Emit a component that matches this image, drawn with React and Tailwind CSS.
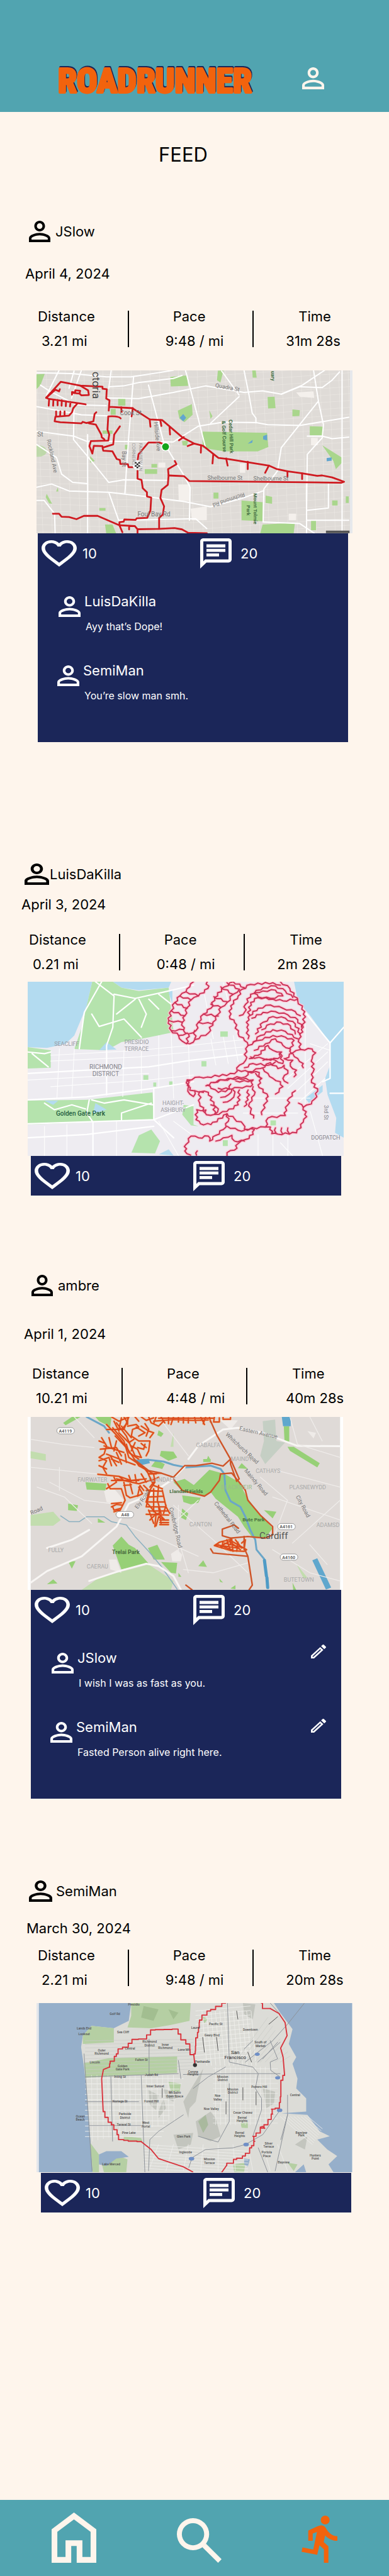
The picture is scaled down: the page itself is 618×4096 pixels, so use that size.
import React from "react";

/* ---------- map drawing helpers ---------- */

// Map artwork is plotted on a 2:3 survey grid; these bring it to screen units.
const SX = 0.394;
const SY = 0.262;

// Turns "x,y x,y ..." into a street-like path of small right-angled steps.
function stair(text, step = 14) {
  const pts = text.trim().split(/\s+/).map((p) => p.split(",").map(Number));
  let d = `M${pts[0][0]} ${pts[0][1]}`;
  for (let i = 1; i < pts.length; i++) {
    const [x0, y0] = pts[i - 1];
    const [x1, y1] = pts[i];
    const n = Math.max(1, Math.round(Math.hypot(x1 - x0, y1 - y0) / step / 2));
    for (let k = 1; k <= n; k++) {
      const x = Math.round(x0 + ((x1 - x0) * k) / n);
      const y = Math.round(y0 + ((y1 - y0) * k) / n);
      d += k % 2 ? `H${x}V${y}` : `V${y}H${x}`;
    }
  }
  return d;
}

// Joins the points with lines that sway a little from side to side.
function sway(text, size = 5) {
  const pts = text.trim().split(/\s+/).map((p) => p.split(",").map(Number));
  let d = `M${pts[0][0]} ${pts[0][1]}`;
  for (let i = 1; i < pts.length; i++) {
    const [x0, y0] = pts[i - 1];
    const [x1, y1] = pts[i];
    const len = Math.hypot(x1 - x0, y1 - y0) || 1;
    const n = Math.max(1, Math.round(len / 16));
    for (let k = 1; k < n; k++) {
      const a = k % 2 ? size : -size;
      const x = Math.round(x0 + ((x1 - x0) * k) / n - ((y1 - y0) / len) * a);
      const y = Math.round(y0 + ((y1 - y0) * k) / n + ((x1 - x0) / len) * a);
      d += `L${x} ${y}`;
    }
    d += `L${x1} ${y1}`;
  }
  return d;
}

function Line({ d, c, w = 1, o = 1 }) {
  return (
    <path
      d={d}
      fill="none"
      stroke={c}
      strokeWidth={w}
      opacity={o}
      strokeLinejoin="round"
      strokeLinecap="round"
      vectorEffect="non-scaling-stroke"
    />
  );
}

function Label({ x, y, s = 9, r = 0, c = "#777", b = 400, anchor = "start", children }) {
  const px = Math.round(x * SX);
  const py = Math.round(y * SY);
  return (
    <text
      x={px}
      y={py}
      fontSize={s}
      fill={c}
      fontWeight={b}
      textAnchor={anchor}
      transform={r ? `rotate(${r} ${px} ${py})` : undefined}
      className="font-['Roboto',sans-serif]"
    >
      {children}
    </text>
  );
}

function MapFrame({ x, y, w, h, title, className, labels, children }) {
  return (
    <svg
      role="img"
      aria-label={title}
      className={`block w-full ${className}`}
      viewBox={`${x * SX} ${y * SY} ${w * SX} ${h * SY}`}
      preserveAspectRatio="xMidYMid slice"
    >
      <g transform={`scale(${SX} ${SY})`}>{children}</g>
      {labels}
    </svg>
  );
}

/* ---------- maps ---------- */

function DinosaurMap() {
  const fine = [];
  for (let i = 0; i < 34; i++) {
    const x = 150 + i * 38;
    fine.push(`M${x} 90L${x + 25} 1080`);
  }
  for (let i = 0; i < 26; i++) {
    const y = 60 + i * 42;
    fine.push(`M149 ${y}L780 ${y + 30}L1422 ${y - 40}`);
  }
  const green = "#a9d68c";
  return (
    <MapFrame
      x={149} y={90} w={1273} h={990}
      title="Route drawn as a dinosaur across Victoria"
      className="h-[259px]"
      labels={
        <g>
          <Label x={376} y={98} s={17} r={90} c="#444">ctoria</Label>
          <Label x={868} y={190} s={9} r={11}>Quadra St</Label>
          <Label x={486} y={364} s={10}>Cook St</Label>
          <Label x={623} y={405} s={9} r={84}>Hillside Ave</Label>
          <Label x={925} y={388} s={8} r={88} c="#3f6b3f" b={700}>Cedar Hill Park</Label>
          <Label x={897} y={396} s={8} r={88} c="#3f6b3f" b={700}>&amp; Golf Course</Label>
          <Label x={152} y={494} s={10}>St</Label>
          <Label x={190} y={512} s={9} r={78}>Rockland Ave</Label>
          <Label x={494} y={582} s={9} r={90}>Bay St</Label>
          <Label x={564} y={532} s={8} r={90} c="#999">FAIRVIEW IN</Label>
          <Label x={536} y={532} s={8} r={90} c="#999">CORNERS</Label>
          <Label x={838} y={756} s={9}>Shelbourne St</Label>
          <Label x={1022} y={758} s={9}>Shelbourne St</Label>
          <Label x={985} y={832} s={9} r={161}>Richmond Rd</Label>
          <Label x={1022} y={834} s={8} r={90} c="#3f6b3f" b={700}>Mount Tolmie</Label>
          <Label x={996} y={910} s={8} r={90} c="#3f6b3f" b={700}>Park</Label>
          <Label x={556} y={978} s={10}>Foul Bay Rd</Label>
          <Label x={1094} y={95} s={8} r={88} c="#3f6b3f" b={700}>uary</Label>
        </g>
      }
    >
      <rect x="149" y="90" width="1273" height="990" fill="#dfdbd7" />
      {fine.map((d) => <Line key={d} d={d} c="#f1eeea" w={0.6} o={0.8} />)}
      <g fill={green}>
        <path d="M818 462L1078 470L1083 555L1040 582L905 582L818 560Z" />
        <path d="M149 115L182 112L165 180L149 205ZM688 130L755 122L760 185L690 188ZM880 92L902 92L890 165L876 150ZM1018 90H1032L1036 135H1020ZM1080 252L1108 250L1112 320L1082 322ZM478 262H507V305H478ZM718 335L775 295L778 360L745 405L725 385ZM1180 328L1210 332L1208 368L1180 370Z" />
        <path d="M1250 430L1305 432L1303 485H1250ZM845 332L858 370L850 385ZM585 690H635V718H585ZM612 658H635V680H612ZM505 542H517V570H505ZM190 840L212 900L200 898L186 860ZM365 610L384 640L365 650ZM448 325H468V360H448ZM415 455H455V475H415ZM735 520L760 515L755 548L738 545Z" />
        <path d="M975 880L1060 890V1005L975 1000ZM862 832H882V868H862ZM1072 850L1098 858V900L1072 895ZM1300 545L1380 620V650L1355 690L1345 640ZM1395 855H1407V895H1395ZM1340 880H1362V910H1340ZM425 1025H455L470 1080H430ZM1060 1025L1190 1015L1185 1080H1050ZM1255 1000H1275V1060H1255ZM235 800L228 825H237ZM402 925H427V942H402Z" />
        <circle cx="155" cy="580" r="35" opacity=".6" />
      </g>
      <g fill="#62a5cf">
        <path d="M726 378L740 355L752 378L740 400ZM1062 490L1078 480V515L1062 510ZM1318 622L1338 618V638L1318 642ZM1000 535L1020 512L1018 530Z" />
      </g>
      <g fill="#f4f0ec">
        <path d="M720 782H768V882H722ZM770 930L835 915V1000H775ZM1195 225L1265 218L1268 258L1210 250ZM1255 500H1282V545H1255ZM968 655H990V712H968ZM1165 960H1195V1000H1165ZM640 650H668V680H640Z" />
      </g>
      {[
        "M149 105L290 110L430 130L530 130L640 105L700 90",
        "M440 190L500 185L560 165L700 140L735 122",
        "M430 258L560 262L700 225L830 185L870 195L985 225L1060 215L1135 235L1220 180L1310 90",
        "M165 180L200 215L310 300L430 305",
        "M149 460L300 490L350 520L700 525L800 430L900 405L1035 408L1080 420L1210 425L1407 375",
        "M749 90L800 380L830 560M965 250L850 412M895 95L965 240M985 90L1005 240L1018 350L1033 380V410",
        "M1265 90L1285 280L1305 420L1300 500L1240 600L1237 930M1283 280L1135 560L1120 700L1065 810L1062 1010",
        "M1135 235L1210 190L1300 195L1340 150L1370 100M1240 490L1300 490L1340 505L1407 495",
        "M149 800L210 780L280 822L440 830L600 858L740 885L850 918L970 870L1065 820",
        "M300 330L298 510L370 640L440 770L500 755L680 758M440 830L480 1000L790 990L835 1050",
        "M149 880L180 880L222 960L224 1080M149 540L230 620L250 720L295 770L355 778",
        "M540 130L520 500L505 840M600 180L660 520L690 600L740 720L768 800L765 1000",
        "M1237 780V1080M1325 780V925L1237 940M1380 90V1080M1237 1000H1407M1062 1010L1210 1020L1270 1080",
        "M240 90L190 240M330 90L290 260M300 95L280 200M450 90L440 200M355 480V1080M149 310L330 360L480 370",
      ].map((d) => <Line key={d} d={d} c="#ffffff" w={2} />)}
      <path d="M1412 90H1422V1080H1412Z" fill="#e6e8ec" />
      <path d="M1315 1063H1410V1078H1315Z" fill="#555" />
      {[
        "M188 257L247 160L325 183L415 190V202L432 205L430 262L443 272L440 335M443 312L535 320L605 388L655 392L735 495L785 535L820 548L882 622L920 628L1085 668L1115 688L1160 703L1220 715L1280 730L1300 728L1340 740L1388 766L1378 772L765 762L743 732L681 728",
        "M325 183L357 212L360 240L330 242L322 232M292 238V222L305 224V212L325 215L322 232L298 228M188 257L225 208L240 218L243 205",
        "M188 257L197 263L347 297M200 265L198 305M217 268L216 305M234 270V303M251 272L250 305M268 278L267 308M286 282L284 310",
        "M313 293L297 320L292 345L280 365L225 372L222 400L245 405L330 412L335 403L350 410L378 400L383 355L390 345M228 340V370M245 340L244 370M262 340V368M360 412L388 420L410 480L412 497L423 510",
        "M488 382Q480 366 438 370L435 450L442 480L438 517L368 520L362 550L374 595L380 548L415 550M485 430L462 480L458 540L415 560L418 578L455 582L472 628L485 634L487 658L517 660L520 678L545 678",
        "M655 535L645 528H600L560 600L556 640M556 700V748L572 755L577 805L594 830V855L611 862L608 940L595 985L553 988L548 997L503 995L500 1008L483 1012V1030L395 973L340 973L310 993L280 980L250 978L240 960L215 960",
        "M483 1030L495 1072M483 1030L545 1035L556 1054L645 1052L705 1047L735 1055L760 1076L835 1078M522 1035V1055M556 1054V1078",
        "M706 640L713 660L679 690L681 728L678 785L653 815L648 865L663 915L658 965L643 985V1052",
        "M490 315L492 342M537 320L532 370M605 388L608 432M648 392L652 428M685 437L687 480M742 495L723 515M783 535L758 550M812 545L811 590M861 600L858 655M913 625L919 668M1000 645V690M1085 668L1070 712M1160 703V735M1219 715V750",
      ].map((d) => <Line key={d} d={d} c="#cf1a20" w={2.8} />)}
      <ellipse cx="669" cy="554" rx="18" ry="27" fill="#fff" />
      <ellipse cx="669" cy="554" rx="14" ry="21" fill="#14a51a" />
      <ellipse cx="556" cy="665" rx="20" ry="30" fill="#f5f5f5" />
      <path d="M545 647h7v9h-7zM559 647h7v9h-7zM552 656h7v10h-7zM545 666h7v9h-7zM559 666h7v9h-7zM552 675h7v9h-7z" fill="#222" />
    </MapFrame>
  );
}

const TIGER = [
  // outline
  "1130,54 1168,95 1200,170 1228,235 1222,330 1205,400 1212,465",
  "1212,465 1180,485 1150,520",
  "1212,465 1258,462 1272,485 1258,520 1262,600 1255,650 1280,718 1268,765 1255,795 1222,815 1203,790",
  "1222,815 1236,872 1222,905 1195,970 1120,978 1095,975 1090,935 1067,935 985,948 980,918 945,885 915,855",
  "915,855 850,920 808,915 790,890 793,830 830,832 832,860 865,858 862,800 840,725 785,715 765,712 755,650",
  "755,650 805,632 835,632 945,612 965,560 990,530 990,460 1000,440",
  // tail
  "780,54 765,85 750,115 725,140 705,180 690,230 680,290 690,350 720,380 735,415 765,430 785,405 840,365 858,300 880,250 890,210 915,180 940,130 965,100",
  "835,54 838,95 800,140 770,165 755,210 745,260 735,300 740,350 760,370 790,350 800,300 820,250 850,215 865,150 905,85 940,54",
  "750,115 800,140", "725,140 770,165", "705,180 755,215", "690,230 745,260", "682,290 735,300",
  "690,350 740,345", "720,380 755,365", "752,430 760,370", "785,400 785,350", "800,300 855,310", "820,250 880,262",
  "850,190 890,210", "862,145 915,175", "890,85 940,130", "915,60 965,100", "940,54 985,90",
  // back stripes
  "1000,440 985,410 960,370 945,300 925,265 930,200 960,140 975,100 1010,70 1100,60 1130,75",
  "965,260 985,240 990,190 1010,130 1060,90 1110,80 1150,110 1180,150",
  "1000,400 995,330 1000,270 1010,180 1040,150 1100,160 1140,170 1200,160",
  "1025,120 1060,110 1110,105 1140,140 1090,155 1040,145 1025,125",
  "1005,260 1040,215 1090,195 1140,215 1190,235 1210,260",
  "1015,275 1060,240 1110,235 1160,255 1200,285 1215,330",
  "1030,370 1060,300 1100,265 1150,275 1190,310 1210,370",
  "1055,345 1090,310 1130,300 1170,320 1190,370",
  "1020,420 1050,380 1100,345 1150,355 1200,400",
  "1000,440 1040,410 1100,380 1150,390 1185,410 1170,470",
  "1025,470 1070,430 1110,400 1140,440 1170,460 1175,490",
  "1005,520 1040,500 1080,440 1100,470 1135,480 1120,520 1060,530",
  "1010,510 1060,520 1110,530 1140,550 1130,490",
  "985,575 1020,550 1080,560 1110,540",
  "960,590 1000,600 1050,580 1090,545 1120,580",
  "1145,520 1180,530 1170,565 1195,590 1185,630",
  "1180,490 1200,520 1222,550 1222,575",
  "1120,580 1145,560 1160,610 1140,640 1160,668",
  "1060,580 1080,610 1100,640 1130,660 1140,690 1110,735",
  "1030,610 1055,640 1040,680 1080,750",
  "1080,750 1070,790 1060,830 1055,860",
  "1190,715 1165,760 1160,800 1145,850 1150,865 1080,880 1070,935",
  // face
  "765,655 755,650 758,700 765,735 780,750 785,715",
  "830,685 850,665 900,650 960,640 1020,650 1010,690 960,695 935,705 880,725 850,700 835,680",
  "860,665 920,640 990,630 1000,600 1045,605 1050,640",
  "950,655 1000,660 1020,650", "930,675 925,705 880,700",
  "820,725 805,720 805,790 828,850", "865,858 880,825 850,800",
  "890,755 920,740 935,705", "900,785 930,770 945,735 940,710",
  "965,710 960,800 915,840 865,858", "1000,710 1000,770 985,810",
  "1020,690 1025,740 1005,790 1010,840 1022,880",
  // paws
  "915,855 920,900 900,950 870,985 845,1020 840,990 800,1000 770,990 750,1040 745,1080 768,1105",
  "985,948 1025,950 1020,980 990,1010 960,1035 945,1075 915,1090 915,1108",
  "870,1020 900,1000 935,985 945,1020 985,1020", "915,930 960,955 985,955",
  "1110,940 1112,970", "1135,940 1138,975", "1160,940 1165,972", "795,1080 792,1105",
];

function TigerMap() {
  return (
    <MapFrame
      x={112} y={54} w={1273} h={1056}
      title="Route drawn as a tiger across San Francisco"
      className="h-[277px]"
      labels={
        <g>
          <Label x={270} y={442} s={9} anchor="middle" c="#9a9aa2">SEACLIFF</Label>
          <Label x={550} y={430} s={9} anchor="middle" c="#9a9aa2">PRESIDIO</Label>
          <Label x={550} y={472} s={9} anchor="middle" c="#9a9aa2">TERRACE</Label>
          <Label x={426} y={584} s={10} anchor="middle" c="#85858d">RICHMOND</Label>
          <Label x={426} y={626} s={10} anchor="middle" c="#85858d">DISTRICT</Label>
          <Label x={326} y={868} s={10} b={500} anchor="middle" c="#1e5b3d">Golden Gate Park</Label>
          <Label x={698} y={801} s={9} anchor="middle" c="#9a9aa2">HAIGHT-</Label>
          <Label x={698} y={843} s={9} anchor="middle" c="#9a9aa2">ASHBURY</Label>
          <Label x={1312} y={1012} s={9} anchor="middle" c="#85858d">DOGPATCH</Label>
          <Label x={1306} y={800} s={9} r={90} c="#85858d">3rd St</Label>
        </g>
      }
    >
      <rect x="112" y="54" width="1273" height="1056" fill="#eeecf1" />
      <path d="M112 54H372L350 200L300 380L265 430L190 455L112 450Z" fill="#b3dbf0" />
      <path d="M455 54H690L680 90L560 105L490 90Z" fill="#b3dbf0" />
      <path d="M1185 54H1385V1000L1350 970L1355 880L1320 740L1310 640L1330 560V425L1250 260L1200 170Z" fill="#b3dbf0" />
      <g fill="#b5e3ad">
        <path d="M372 54H455L490 90L560 110L680 90L700 360L620 385L570 400L490 420L430 470L300 462L330 330Z" />
        <path d="M112 450L205 470V575L112 580ZM112 775L350 770L470 750L615 725L620 890L360 905L112 920Z" />
        <path d="M530 1090L560 985L610 950L645 1020L625 1095ZM740 800L780 810V920L800 930L770 925L735 860ZM888 355H918V388H888ZM812 535H832V568H812Z" />
        <path d="M578 620H598V650H578ZM618 665H630V690H618ZM682 658H696V682H682ZM1090 895H1112V925H1090ZM898 1015H918V1050H898Z" />
      </g>
      <path d="M400 470L430 420L470 465ZM385 790L430 830L375 855ZM180 775H235L215 800ZM640 1100L680 1070L700 1108ZM1230 760L1300 680V720L1245 790ZM680 120L695 100V190Z" fill="#b3dbf0" />
      {[
        "M385 54L460 140L455 330L430 440V740M460 130L545 155L650 120L780 75M410 54L340 240L320 460",
        "M112 610L350 590L600 570L770 530L980 495M112 770L350 752L620 700L780 660M360 770L350 850L375 905V1110",
        "M112 915L620 890L780 800M112 1000L350 980L620 930M640 130L690 190M1230 240L1330 425L1330 640L1300 660M1330 425L1385 330M1385 730H1330",
        "M370 250L400 325L500 280L570 390M545 160L470 250M560 160L590 250L570 330M600 160L640 220M112 480L180 490L205 480M130 490L195 570",
        "M180 790L220 830L290 800L345 825M370 770L420 790L500 770L615 800M490 850L610 790M490 850V890M620 700V890L700 1000",
      ].map((d) => <Line key={d} d={d} c="#ffffff" w={2.2} />)}
      {[
        "M205 500L560 470L770 440L980 405M205 535L560 510L770 480L980 450M205 690L600 650L780 620M300 460L290 750M570 400V730M690 360L700 760",
        "M240 460L230 760M500 470L495 750M640 380V700M760 430L765 700M850 400L870 560M900 390L920 550M940 380L960 540M112 650L600 610M180 930V1110M270 920V1110M470 900V1110",
        "M640 900L720 1110M700 900L790 1000M900 60L960 400M820 100L860 400M1230 260V800M1250 430L1330 470M1040 980V1110M1100 980V1110M1160 980V1110M1250 840L1300 1110M980 760L1250 760M980 850L1200 850",
        "M1180 740L1320 540M1160 700L1320 480M1140 660L1320 430M1200 790L1310 640M1130 1030L1180 1110",
      ].map((d) => <Line key={d} d={d} c="#ffffff" w={1.2} o={0.9} />)}
      {TIGER.map((d) => <Line key={"h" + d} d={sway(d)} c="#ffc9d6" w={5} o={0.8} />)}
      {TIGER.map((d) => <Line key={d} d={sway(d)} c="#cb3358" w={2} />)}
    </MapFrame>
  );
}

function CardiffMap() {
  const routes = [
    "M850 80L875 165L930 310L965 430L955 445L930 340L930 310L900 352L855 335L790 350H745L700 420L650 395L600 380L540 310",
    "M700 430L735 500L825 535L850 510L885 440L890 400L935 395L965 450L990 500L1000 560L1050 650L1100 720V770L1070 790L1000 780L930 790L897 775V735L945 710L962 730",
    "M985 780V850L1000 900L1018 1075L1005 1104M850 855L860 880L1000 900M750 1075L775 1104",
  ];
  const net = [
    "M430 100L480 180L520 260L560 350L620 400L625 450L600 510L590 570L630 640L625 720",
    "M455 120L500 200L520 300L580 360M470 90L510 170L545 290L570 300M450 54L480 80L510 60M430 130L500 130L520 54M460 80L480 140M490 60L480 130",
    "M500 54L515 90L490 130M515 54V100M545 54L560 80M570 54L590 75L620 60M600 54L610 90L640 110L660 80M630 54L620 95M650 54L665 90M680 54V95M700 54L690 100M720 54V85M740 54V90M760 60V90M785 54L790 90M810 54L825 100M830 54L820 95M845 54L850 85M640 62H860M620 80L700 70L780 75L840 72",
    "M865 54L862 85H885V60M900 54V68H930V54",
    "M515 110L550 100L560 115L535 130L530 170L550 190M570 110L600 140L620 150L605 180M550 115L585 150L560 170M585 95L600 130L590 170M540 180L560 200L605 200L600 260L590 290M530 230L555 250L570 300M555 240L580 250L585 220M570 215L590 240M545 210L530 260",
    "M410 180L430 230L420 280L400 300L430 320L415 360L430 400M400 200L425 215M405 250L470 240L490 290M400 320L440 300L450 350M420 230L500 270M440 180L450 240M470 200L460 260M400 350L430 370M430 280L500 320L545 345M450 310L480 330M470 270L490 340M445 290L470 350M505 280L510 330",
    "M395 402L480 415L530 440L590 430M460 420L470 450L430 490M480 415L500 440M520 410L530 450M545 405L550 450M570 400L590 450M590 370L610 440L640 420M580 360L600 400L630 400M450 440L560 440M470 430L560 460L605 440",
    "M435 460L445 490L490 490L505 560L485 620L470 645M500 450L510 530L525 545L560 530M525 460L535 520M560 480L575 520L555 535L565 470L580 500M500 470L530 465M450 580L490 575M450 600L470 585L495 590M455 600L460 620L485 610M460 630L480 620L475 650",
    "M590 500L655 505M600 540L660 535M590 570L665 570M595 600L670 600M600 625L680 625M590 645L680 650M605 500L590 600M620 490V630M640 470L635 560L650 640M655 500L670 600L685 640M600 620L620 700M640 600L650 700M610 650L640 640L665 680L640 660L630 715M645 680H680M645 695H680M645 708H680M625 650L605 680M670 590L660 640",
    "M865 835L885 815L925 800L960 830L995 860L985 870L930 865L865 835M880 830L935 860M900 810L895 850M915 800L930 865M935 795L940 870M950 800L975 850M960 815L955 870M890 840L925 810L970 860M870 830L960 850M905 820L985 850M975 820L990 800L985 860M930 790V830",
    "M605 420L620 470L655 490M580 470L600 500M625 440L605 480M600 400L650 395M560 310L520 270L510 220M490 110L530 180M480 150L520 210L540 190M465 170L510 240",
  ];
  return (
    <MapFrame
      x={112} y={54} w={1272} h={1050}
      title="Route through the streets of Cardiff"
      className="h-[275px]"
      labels={
        <g>
          <Label x={964} y={132} s={9} r={13}>Eastern Avenue</Label>
          <Label x={908} y={165} s={9} r={43}>Whitchurch Road</Label>
          <Label x={840} y={238} s={9} anchor="middle" c="#aaa">GABALFA</Label>
          <Label x={975} y={320} s={9} anchor="middle" c="#aaa">MAINDY</Label>
          <Label x={1080} y={394} s={9} anchor="middle" c="#aaa">CATHAYS</Label>
          <Label x={985} y={382} s={9} r={50}>Maindy Road</Label>
          <Label x={374} y={446} s={9} anchor="middle" c="#aaa">FAIRWATER</Label>
          <Label x={655} y={446} s={9} anchor="middle" c="#aaa">LLANDAFF</Label>
          <Label x={752} y={516} s={8} b={700} anchor="middle" c="#4a7040">Llandaff Fields</Label>
          <Label x={955} y={494} s={9} anchor="middle" c="#9dbb8c">BLACKWEIR</Label>
          <Label x={1242} y={494} s={9} anchor="middle" c="#aaa">PLASNEWYDD</Label>
          <Label x={1194} y={540} s={9} r={62}>City Road</Label>
          <Label x={862} y={580} s={9} r={52}>Cathedral Road</Label>
          <Label x={556} y={615} s={9} r={-55}>Ely Road</Label>
          <Label x={682} y={605} s={9} r={77}>Cowbridge Road</Label>
          <Label x={128} y={650} s={9} r={-24}>Road</Label>
          <Label x={1022} y={686} s={8} b={700} anchor="middle" c="#4a7040">Bute Park</Label>
          <Label x={810} y={718} s={9} anchor="middle" c="#aaa">CANTON</Label>
          <Label x={1105} y={792} s={15} anchor="middle" c="#555">Cardiff</Label>
          <Label x={1276} y={722} s={9} c="#aaa">ADAMSD</Label>
          <Label x={225} y={874} s={9} anchor="middle" c="#aaa">FULLY</Label>
          <Label x={507} y={886} s={9} b={700} anchor="middle" c="#4a6a40">Trelai Park</Label>
          <Label x={393} y={974} s={9} anchor="middle" c="#aaa">CAERAU</Label>
          <Label x={1206} y={1052} s={9} anchor="middle" c="#aaa">BUTETOWN</Label>
          {[[265, 138, "A4119"], [504, 647, "A48"], [1156, 720, "A4161"], [1166, 905, "A4160"]].map(([x, y, t]) => (
            <g key={t}>
              <rect x={x * SX - 14} y={y * SY - 5} width="28" height="10" rx="5" fill="#fff" stroke="#999" />
              <Label x={x} y={y + 10} s={7} b={700} anchor="middle" c="#666">{t}</Label>
            </g>
          ))}
        </g>
      }
    >
      <rect x="112" y="54" width="1272" height="1050" fill="#ffffff" />
      <rect x="124" y="54" width="1248" height="1050" fill="#dfdad7" />
      <g fill="#97d077">
        <path d="M255 90L290 54H325L265 105ZM385 54H450L445 115L400 80ZM630 315L665 340L655 370L610 355ZM650 260L700 265L715 300L680 320L645 290ZM640 135L660 155L650 175L635 165Z" />
        <path d="M700 450L745 430L780 465L790 480L745 440L780 470L845 375L905 400L965 450L995 540L1050 650L1100 730L1070 790H1020L985 720L960 660L870 550L850 510L825 535L740 510Z" />
        <path d="M735 530L810 545L800 575L770 585L740 570ZM1145 110H1167V205H1148ZM1160 235L1185 235L1290 335L1280 360L1170 260ZM345 450L430 460L425 500L350 495ZM275 580L315 590L310 625L275 620ZM735 610L760 640L750 680L730 665Z" />
        <path d="M455 835L490 780L520 830L545 850L600 945L490 980L475 920ZM597 850L635 830L665 920L620 920ZM650 935L715 940L710 1005L690 1000ZM800 960L820 925L835 965ZM275 930L305 930L290 975ZM190 1070L215 1040L232 1065ZM975 335L1000 370L960 365ZM840 290L850 315L835 310ZM395 670L425 695H395Z" />
        <path d="M820 310h30v18h-30zM885 1035l15 25-12-5zM930 1095l20-20v25zM720 1000l12 25h-12zM1180 1060l15 44h-12zM1065 620l50 10-15 40z" />
      </g>
      <g fill="#c2ddae">
        <path d="M124 650L215 630L245 680L215 715H124ZM330 1104L400 1030L600 950L700 1050L690 1104ZM124 262L185 280V320L124 305ZM1195 945L1240 1030L1225 1035ZM700 150V235L688 235Z" />
      </g>
      <path d="M1060 80L1110 70L1115 200L1150 210L1070 340L1050 290L1065 200Z" fill="#c5cfc4" />
      <path d="M420 505L455 480L500 560L480 590L430 570ZM690 885L715 860L735 890L730 930H695ZM440 920L470 920L490 1000L445 980ZM1240 140L1275 150L1265 185ZM885 70L960 75L930 130Z" fill="#efebe8" />
      <g fill="#5fa7cd">
        <path d="M1137 54H1173V110H1142ZM550 312L600 308L605 335L575 345L555 330ZM1260 925L1280 912L1336 1090L1315 1102Z" />
      </g>
      <Line d="M350 54L420 110L440 150M600 315L660 325L700 345L750 360L850 350L890 370L905 400L910 500L930 565L970 600L990 660L1010 740L1030 800L1035 860L1065 915" c="#6ba6c8" w={3} />
      <Line d="M1067 925L1075 1020M1077 1030L1080 1090" c="#4f9bc6" w={5} />
      <Line d="M245 655L280 690L320 690L350 660H420L450 690L510 710L545 780L600 870L650 960L715 1100" c="#8bb0c0" w={1.5} />
      {[
        "M760 310L800 230L870 160L900 130L960 120L1060 150L1200 230L1372 232",
        "M124 1060L190 990L330 900L470 720L520 580L600 530L690 440L750 350",
        "M360 1050L480 990L590 945L640 960L700 1020L730 1104M190 850L290 800L360 740",
      ].map((d) => <Line key={d} d={d} c="#f8f6f4" w={3} />)}
      {[
        "M124 190L250 220L380 240M300 54L380 180M124 360L390 400M200 450L340 560L450 580M640 54L760 290M700 590L860 800L1000 1000M1120 380L1372 480M1100 540L1372 680M1180 820L1372 560M1250 830L1320 950M520 720L620 780L800 900M720 590V900M1170 54L1200 220L1372 300M1050 420L1160 560L1100 800M740 980L860 1000L1000 940",
        "M150 480L260 540L370 700M240 360V500M800 560L700 700L760 1000M1250 54L1300 200M1100 860L1250 1000L1372 1050",
      ].map((d) => <Line key={d} d={d} c="#efecea" w={1.3} />)}
      {net.map((d) => <Line key={"o" + d} d={d} c="#f5a65f" w={3.2} o={0.7} />)}
      {net.map((d) => <Line key={d} d={d} c="#dc4a1c" w={2} />)}
      {routes.map((d) => <Line key={d} d={d} c="#cf5427" w={2.4} />)}
    </MapFrame>
  );
}

function HeartMap() {
  const names = [
    [465, 108, "Golf Rd"], [540, 50, "Presidio"], [498, 220, "Sea Cliff"], [605, 275, "Richmond"], [605, 298, "District"],
    [668, 296, "Inner"], [668, 316, "Richmond"], [410, 330, "Outer"], [410, 350, "Richmond"], [525, 320, "Central"],
    [383, 402, "Lincoln"], [570, 386, "Fulton St"], [495, 425, "Golden"], [495, 446, "Gate Park"], [485, 492, "Irving St"],
    [612, 480, "Judah Rd"], [628, 546, "Inner Sunset"], [486, 638, "Noriega St"], [505, 716, "Parkside"], [505, 738, "District"],
    [500, 782, "Taraval St"], [590, 770, "West"], [590, 790, "Portal"], [520, 828, "Pine Lake"], [705, 586, "Mt Sutro"],
    [705, 608, "Open Space"], [612, 640, "Forest Hill"], [852, 684, "Noe Valley"], [778, 458, "Corona"], [778, 476, "Heights"],
    [898, 490, "Mission"], [898, 508, "District"], [878, 606, "Noe"], [878, 626, "Valley"], [938, 566, "Mission"],
    [938, 586, "District"], [1045, 552, "Potrero Hill"], [978, 738, "Bernal"], [978, 756, "Heights"], [740, 852, "Glen Park"],
    [968, 830, "Bernal"], [968, 850, "Heights"], [748, 948, "Ingleside"], [846, 992, "Mission"], [846, 1012, "Terrace"],
    [1075, 950, "Portola"], [1075, 970, "Place"], [1085, 895, "Silver"], [1085, 915, "Terrace"], [1145, 1008, "Bayview"],
    [450, 1020, "Lake Merced"], [325, 730, "Ocean"], [325, 748, "Beach"], [340, 198, "Lands End"], [340, 232, "Lookout"],
    [1215, 828, "Bayview"], [1215, 846, "Park"], [1272, 966, "Hunters"], [1272, 988, "Point"], [1190, 600, "Central"],
    [1052, 282, "South of"], [1052, 302, "Market"], [1010, 204, "Downtown"], [870, 170, "Pacific St"], [855, 238, "Geary Blvd"],
    [980, 706, "Cesar Chavez"], [790, 192, "Laurel"], [817, 398, "Panhandle"], [742, 326, "Lone Mt"],
  ];
  const route = [
    "910,42 880,62 850,90 820,115 805,160 800,220 790,270 788,350 783,355",
    "768,355 765,290 735,265 725,230 712,200 610,205 605,235 578,260 540,262 510,310 480,320 470,365 445,410 443,430",
    "1055,42 1062,75 1090,75",
    "1148,480 1133,510 1133,610 1125,680 1095,685 1100,715 1075,780 1055,800 1045,830 1020,850 1028,880 1015,920 990,970 955,990 915,1025",
    "417,700 430,735 450,780 470,810 482,870 500,875 570,882",
  ];
  const smooth = [
    "M768 355L782 355L786 410M443 430L418 445L411 500L417 700M1090 75L1125 105L1150 160L1158 240L1132 315L1142 370L1148 480M570 882L610 930L640 985L690 1010L740 1035L778 1066M915 1025L895 1068",
    "M1050 795L1060 790L1068 802",
  ];
  return (
    <MapFrame
      x={148} y={42} w={1274} h={1026}
      title="Route drawn as a heart around San Francisco"
      className="h-[269px]"
      labels={
        <g>
          {names.map(([x, y, t]) => (
            <Label key={`${x}-${y}`} x={x} y={y + 6} s={5} b={500} anchor="middle" c="#4d4d4d">{t}</Label>
          ))}
          <Label x={948} y={350} s={8} anchor="middle" c="#222">San</Label>
          <Label x={948} y={380} s={8} anchor="middle" c="#222">Francisco</Label>
        </g>
      }
    >
      <rect x="148" y="42" width="1274" height="1026" fill="#e4e7ec" />
      <rect x="158" y="42" width="1262" height="1026" fill="#96afca" />
      <path
        d="M530 42H1105L1130 100L1165 170L1180 200L1165 290L1195 370L1180 410L1200 500L1195 560L1235 620V700L1135 710L1240 720L1290 820L1330 850L1280 870L1320 930L1360 970L1325 1020L1345 1068H1235L1225 1020L1190 1068H375L355 640L340 430L328 310L335 240L370 180L460 195L520 150Z"
        fill="#dcdcd7"
      />
      <path d="M530 42H770L765 150L690 175L610 195L515 190L530 120ZM370 180L460 195V280L335 290L335 240ZM340 405L445 375L715 365V465L345 495Z" fill="#b5cfa3" />
      <path d="M365 890L400 960V1068H375ZM410 1010L480 970L515 990L510 1068H420ZM500 850L570 860L575 880L500 875ZM680 520L730 530L725 580L690 575ZM815 120L838 140L825 165ZM970 770L1000 765V800L975 798ZM940 1020L990 1010L985 1068H945ZM1160 1010L1200 1020L1185 1060Z" fill="#b5cfa3" />
      <path d="M400 960L430 940L490 940L520 975L470 985L430 1030L400 1020ZM985 985L1008 990L1000 1035L985 1020Z" fill="#96afca" />
      <g fill="#a5a9a0" opacity=".45">
        <path d="M760 740L740 640L780 540L820 440L800 560L790 640L765 680ZM790 760L850 700L870 740L890 850L850 880L800 850ZM640 700L660 620L670 680L640 740ZM700 840L780 830L770 900L720 930ZM1060 560L1110 580L1105 650L1075 680ZM980 42L1030 50L1020 140L985 110ZM600 570L640 600L630 690L605 660ZM660 560L720 590L700 640L670 620ZM1190 900L1240 850L1230 930Z" />
      </g>
      <path d="M800 760L830 720L840 780L820 830ZM580 60L640 80L620 150L570 130ZM680 80L720 100L700 140Z" fill="#8fae7d" opacity=".5" />
      {Array.from({ length: 12 }, (_, i) => (
        <Line key={i} d={`M345 ${500 + i * 32}H${740 - i * 8}`} c="#f2f2ef" w={0.9} />
      ))}
      {Array.from({ length: 16 }, (_, i) => (
        <Line key={i} d={`M${370 + i * 22} 480L${374 + i * 22} ${880 - i * 8}`} c="#efefec" w={0.7} />
      ))}
      {Array.from({ length: 12 }, (_, i) => (
        <Line key={i} d={`M790 ${90 + i * 27}L1010 ${60 + i * 27}M${815 + i * 18} 90L${835 + i * 18} 420`} c="#f1f1ee" w={0.8} />
      ))}
      {Array.from({ length: 12 }, (_, i) => (
        <Line key={i} d={`M860 ${440 + i * 30}H1120M${870 + i * 20} 430V${780}`} c="#efefec" w={0.7} />
      ))}
      {Array.from({ length: 10 }, (_, i) => (
        <Line key={i} d={`M345 ${270 + i * 22}L780 ${262 + i * 20}M${950 + i * 20} 400L${1080 + i * 10} ${130 + i * 26}`} c="#c9cac6" w={0.7} />
      ))}
      {Array.from({ length: 9 }, (_, i) => (
        <Line key={i} d={`M${600 + i * 70} 1060L${640 + i * 60} 900M${1130 + i * 14} 730L${1260 + i * 5} ${900 - i * 12}M580 ${900 + i * 18}L${1000} ${940 + i * 18}`} c="#efefec" w={0.8} />
      ))}
      {[
        "M340 350L372 1060M448 490L455 880M570 480L585 1068M602 260V480M600 1060L605 870L640 820L740 720M720 390L730 500",
        "M918 42L925 400L1020 430L1042 470L1030 560L1055 620V690L1020 850M910 430L840 490L780 560M925 530L925 760L880 885L800 850",
        "M762 1040L775 980L830 930L940 920L990 900L1060 840L1130 690M1042 920L1080 1068M1160 720L1110 1060M1160 600V720",
        "M1228 42L1160 170L1100 270L990 400M1090 42L1130 110M1090 270L1120 380L1090 400L1092 450L1130 490M1040 400L1130 280",
        "M345 640H560M360 785H570M345 490L720 470M740 475L940 470L1130 470M1133 870L1160 720M985 320L1020 270M1060 380L1120 280",
      ].map((d) => <Line key={d} d={d} c="#8d9299" w={1} />)}
      <g fill="#6f8fc6">
        <circle cx="1038" cy="352" r="10" /><circle cx="1120" cy="495" r="10" /><circle cx="1128" cy="692" r="11" />
        <circle cx="993" cy="900" r="11" /><circle cx="773" cy="986" r="11" />
      </g>
      <Line d="M874 250L880 330M818 250L825 340M955 90L960 140M980 555V630M1033 580V660M1085 170L1120 125M1000 340L1015 400M655 560V615M912 640V715" c="#555" w={1} />
      {route.map((d) => <Line key={d} d={stair(d, 8)} c="#d8343d" w={1.9} />)}
      {smooth.map((d) => <Line key={d} d={d} c="#d8343d" w={1.9} />)}
      <ellipse cx="787" cy="418" rx="8" ry="12" fill="#333" />
    </MapFrame>
  );
}

/* ---------- icons ---------- */

function PersonIcon({ className }) {
  return (
    <svg viewBox="4 4 16 16" preserveAspectRatio="none" fill="currentColor" aria-hidden="true" className={`block shrink-0 ${className}`}>
      <path d="M12 5.9a2.1 2.1 0 1 1 0 4.2 2.1 2.1 0 0 1 0-4.2m0 9c2.97 0 6.1 1.46 6.1 2.1v1.1H5.9V17c0-.64 3.13-2.1 6.1-2.1M12 4C9.79 4 8 5.79 8 8s1.79 4 4 4 4-1.79 4-4-1.79-4-4-4zm0 9c-2.67 0-8 1.34-8 4v3h16v-3c0-2.66-5.33-4-8-4z" />
    </svg>
  );
}

function HeartIcon() {
  return (
    <svg viewBox="2 3 20 18.35" preserveAspectRatio="none" fill="currentColor" aria-hidden="true" className="block h-[42px] w-14">
      <path d="M16.5 3c-1.74 0-3.41.81-4.5 2.09C10.91 3.81 9.24 3 7.5 3 4.42 3 2 5.42 2 8.5c0 3.78 3.4 6.86 8.55 11.54L12 21.35l1.45-1.32C18.6 15.36 22 12.28 22 8.5 22 5.42 19.58 3 16.5 3zm-4.4 15.55-.1.1-.1-.1C7.14 14.24 4 11.39 4 8.5 4 6.5 5.5 5 7.5 5c1.54 0 3.04.99 3.57 2.36h1.87C13.46 5.99 14.96 5 16.5 5c2 0 3.5 1.5 3.5 3.5 0 2.89-3.14 5.74-7.9 10.05z" />
    </svg>
  );
}

function ChatIcon() {
  return (
    <svg viewBox="2 2 20 20" preserveAspectRatio="none" fill="currentColor" aria-hidden="true" className="block h-12 w-[50px]">
      <path d="M4 4h16v12H5.17L4 17.17V4m0-2c-1.1 0-1.99.9-1.99 2L2 22l4-4h14c1.1 0 2-.9 2-2V4c0-1.1-.9-2-2-2H4zm2 10h8v2H6v-2zm0-3h12v2H6V9zm0-3h12v2H6V6z" />
    </svg>
  );
}

function PencilIcon() {
  return (
    <svg viewBox="3 3 18 18" preserveAspectRatio="none" fill="currentColor" aria-hidden="true" className="block h-[22px] w-6">
      <path d="m14.06 9.02.92.92L5.92 19H5v-.92l9.06-9.06M17.66 3c-.25 0-.51.1-.7.29l-1.83 1.83 3.75 3.75 1.83-1.83c.39-.39.39-1.02 0-1.41l-2.34-2.34c-.2-.2-.45-.29-.71-.29zm-3.6 3.19L3 17.25V21h3.75L17.81 9.94l-3.75-3.75z" />
    </svg>
  );
}

/* ---------- feed ---------- */

function Stats({ values, indent, className }) {
  const labels = [
    ["Distance", "pl-[2px]"],
    ["Pace", "pl-[70px]"],
    ["Time", "pl-[71px]"],
  ];
  return (
    <dl className={`grid grid-cols-[145fr_2fr_197fr_2fr_157fr] items-center whitespace-nowrap ${className}`}>
      {labels.map(([label, pad], i) => (
        <React.Fragment key={label}>
          {i > 0 && <div aria-hidden="true" className="h-[58px] bg-black" />}
          <div className="flex min-w-0 flex-col gap-[11px]">
            <dt className={pad}>{label}</dt>
            <dd className={indent[i]}>{values[i]}</dd>
          </div>
        </React.Fragment>
      ))}
    </dl>
  );
}

function Reactions() {
  return (
    <div className="flex h-[63px] items-center pl-[6px]">
      <button type="button" className="flex w-[252px] items-center gap-[9px]">
        <HeartIcon />
        <span>10</span>
      </button>
      <button type="button" className="flex items-center gap-[14px]">
        <ChatIcon />
        <span>20</span>
      </button>
    </div>
  );
}

function Comment({ name, text, editable, className, editClassName }) {
  return (
    <li className={`flex h-[110px] items-start ${className}`}>
      <PersonIcon className="mt-[13px] h-[33px] w-[35px]" />
      <div className="ml-[6px] flex-1">
        <p className="mt-[7px]">{name}</p>
        <p className="mt-[14px] pl-[2px] text-[16px] leading-[24px]">{text}</p>
      </div>
      {editable && (
        <button type="button" aria-label={`Edit comment by ${name}`} className={editClassName}>
          <PencilIcon />
        </button>
      )}
    </li>
  );
}

function Comments({ items, editable }) {
  return (
    <ul className="h-[269px] pt-6 pr-6">
      {items.map(([name, text], i) => (
        <Comment
          key={name}
          name={name}
          text={text}
          editable={editable}
          className={i === 0 ? "pl-[33px]" : "pl-[31px]"}
          editClassName={i === 0 ? "" : "pt-2"}
        />
      ))}
    </ul>
  );
}

const narrow = ["pl-2", "pl-[58px]", "pl-[51px]"];
const wide = ["pl-2", "pl-[69px]", "pl-[61px]"];

export default function App() {
  return (
    <div className="flex min-h-screen flex-col bg-[#fef5ec] font-['Inter',sans-serif] text-[22px] leading-[28px] text-black">
      <header className="flex h-[178px] items-end justify-between bg-[#51a4b0] pr-[103px] pb-[24px] pl-[88px]">
        <a href="#home" aria-label="Roadrunner home" className="block">
          <svg viewBox="0 0 316 56" className="block h-[56px] w-[316px] overflow-visible" aria-hidden="true">
            <g
              className="font-['Liberation_Sans_Narrow','Roboto_Condensed','Liberation_Sans',sans-serif]"
              fontSize="54"
              fontWeight="700"
              textAnchor="middle"
              strokeWidth="4"
              strokeLinejoin="round"
            >
              <text x="159" y="47" fill="#1b2659" stroke="#1b2659">ROADRUNNER</text>
              <text x="158" y="49" fill="#f2630d" stroke="#f2630d">ROADRUNNER</text>
            </g>
          </svg>
        </a>
        <a href="#profile" aria-label="Profile" className="mb-3 text-[#fef5ec]">
          <PersonIcon className="h-[35px] w-[35px]" />
        </a>
      </header>

      <main className="flex flex-1 flex-col">
        <h1 className="mt-12 pr-9 text-center text-[31px] leading-[40px]">FEED</h1>

        <article className="mt-[85px] pr-[58px] pl-[58px]">
          <h2 className="-ml-3 flex h-[34px] items-center gap-[8px]">
            <PersonIcon className="h-[34px] w-[34px]" />
            JSlow
          </h2>
          <p className="mt-9 -ml-[18px]">April 4, 2024</p>
          <Stats className="mt-10" values={["3.21 mi", "9:48 / mi", "31m 28s"]} indent={narrow} />
          <div className="mt-[33px]"><DinosaurMap /></div>
          <div className="mr-[7px] ml-[2px] bg-[#1b2659] text-white">
            <Reactions />
            <Comments items={[["LuisDaKilla", "Ayy that’s Dope!"], ["SemiMan", "You’re slow man smh."]]} />
          </div>
        </article>

        <article className="mt-[193px] pr-[72px] pl-[44px]">
          <h2 className="-ml-[5px] flex h-[34px] items-center">
            <PersonIcon className="h-[34px] w-[39px]" />
            <span className="pl-px">LuisDaKilla</span>
          </h2>
          <p className="mt-[17px] -ml-[10px]">April 3, 2024</p>
          <Stats className="mt-7" values={["0.21 mi", "0:48 / mi", "2m 28s"]} indent={narrow} />
          <div className="mt-[14px]"><TigerMap /></div>
          <div className="mr-1 ml-[5px] bg-[#1b2659] text-white">
            <Reactions />
          </div>
        </article>

        <article className="mt-[126px] pr-[73px] pl-[44px]">
          <h2 className="ml-[6px] flex h-[34px] items-center gap-[8px]">
            <PersonIcon className="h-[34px] w-[34px]" />
            ambre
          </h2>
          <p className="mt-[46px] -ml-[6px]">April 1, 2024</p>
          <div className="-mr-1 pl-[5px]">
            <Stats className="mt-[35px]" values={["10.21 mi", "4:48 / mi", "40m 28s"]} indent={wide} />
          </div>
          <div className="mt-4"><CardiffMap /></div>
          <div className="mr-[3px] ml-[5px] bg-[#1b2659] text-white">
            <Reactions />
            <Comments
              editable
              items={[["JSlow", "I wish I was as fast as you."], ["SemiMan", "Fasted Person alive right here."]]}
            />
          </div>
        </article>

        <article className="mt-[130px] mb-[456px] pr-[58px] pl-[58px]">
          <h2 className="-ml-[12px] flex h-[34px] items-center gap-[6px]">
            <PersonIcon className="h-[34px] w-[37px]" />
            SemiMan
          </h2>
          <p className="mt-7 -ml-[18px] pl-[2px]">March 30, 2024</p>
          <Stats className="mt-[15px]" values={["2.21 mi", "9:48 / mi", "20m 28s"]} indent={narrow} />
          <div className="mt-[23px]"><HeartMap /></div>
          <div className="mt-px mr-[2px] ml-[7px] bg-[#1b2659] text-white">
            <Reactions />
          </div>
        </article>
      </main>

      <nav aria-label="Main" className="flex h-[121px] items-end justify-between bg-[#51a4b0] px-[82px] pb-[21px] text-[#fef5ec]">
        <a href="#feed" aria-label="Home">
          <svg viewBox="207 186 180 306" preserveAspectRatio="none" fill="currentColor" className="block h-20 w-[71px]" aria-hidden="true">
            <path fillRule="evenodd" d="M207 288L297 186L387 288V492H308V390H286V492H207ZM230 304V457H263V355H331V457H364V304L297 228Z" />
          </svg>
        </a>
        <a href="#search" aria-label="Search">
          <svg viewBox="710 222 180 270" preserveAspectRatio="none" fill="currentColor" className="block h-[71px] w-[71px]" aria-hidden="true">
            <path fillRule="evenodd" d="M710 319a65 97 0 1 1 130 0a65 97 0 1 1 -130 0ZM730 319a45 67 0 1 0 90 0a45 67 0 1 0 -90 0Z" />
            <path d="M812 397L827 376L890 470L876 492Z" />
          </svg>
        </a>
        <a href="#runs" aria-label="Runs" className="text-[#f2630d]">
          <svg viewBox="1213 216 144 288" preserveAspectRatio="none" fill="currentColor" className="block h-[75px] w-[57px]" aria-hidden="true">
            <ellipse cx="1308" cy="243" rx="18" ry="27" />
            <path d="M1240 307L1277 281Q1300 266 1310 290C1322 325 1340 342 1357 342V370C1335 370 1318 355 1308 337L1302 377L1321 403V504H1303V422L1285 397L1276 455L1213 437L1217 410L1260 423L1275 316L1258 325V370H1240Z" />
          </svg>
        </a>
      </nav>
    </div>
  );
}
